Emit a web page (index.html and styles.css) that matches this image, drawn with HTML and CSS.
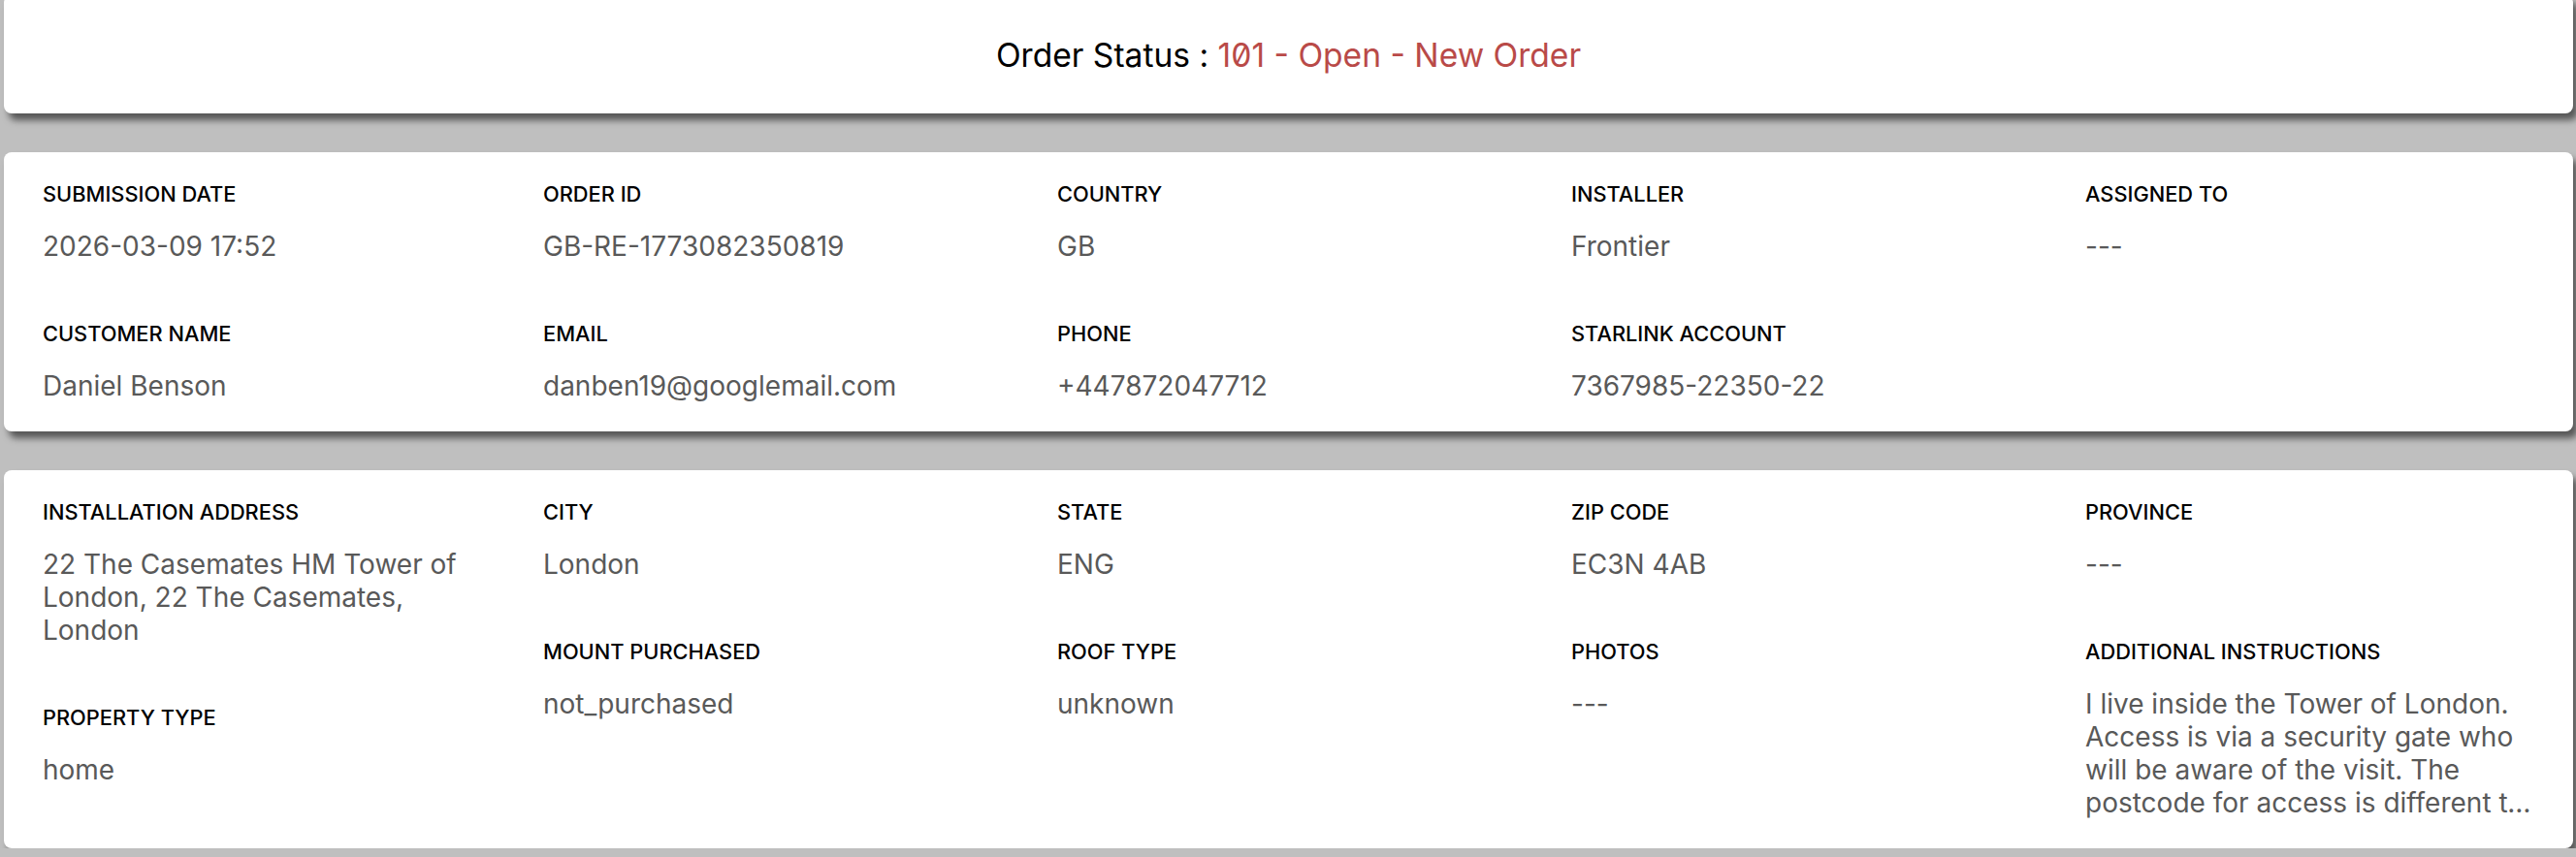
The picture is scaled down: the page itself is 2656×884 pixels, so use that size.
FILE: index.html
```html
<!DOCTYPE html>
<html lang="en">
<head>
<meta charset="utf-8">
<title>Order details</title>
<link rel="stylesheet" href="styles.css">
</head>
<body>
<main class="page">
  <section class="card status-card">
    <h1 class="status">Order Status : <span class="status-value">101 - Open - New Order</span></h1>
  </section>

  <section class="card info-card">
    <div class="col">
      <div class="field"><div class="label">Submission Date</div><div class="value">2026-03-09 17:52</div></div>
      <div class="field"><div class="label">Customer Name</div><div class="value">Daniel Benson</div></div>
    </div>
    <div class="col">
      <div class="field"><div class="label">Order ID</div><div class="value">GB-RE-1773082350819</div></div>
      <div class="field"><div class="label">Email</div><div class="value">danben19@googlemail.com</div></div>
    </div>
    <div class="col">
      <div class="field"><div class="label">Country</div><div class="value">GB</div></div>
      <div class="field"><div class="label">Phone</div><div class="value">+447872047712</div></div>
    </div>
    <div class="col">
      <div class="field"><div class="label">Installer</div><div class="value">Frontier</div></div>
      <div class="field"><div class="label">Starlink Account</div><div class="value">7367985-22350-22</div></div>
    </div>
    <div class="col">
      <div class="field"><div class="label">Assigned To</div><div class="value">---</div></div>
    </div>
  </section>

  <section class="card info-card">
    <div class="col">
      <div class="field"><div class="label">Installation Address</div><div class="value">22 The Casemates HM Tower of London, 22 The Casemates, London</div></div>
      <div class="field"><div class="label">Property Type</div><div class="value">home</div></div>
    </div>
    <div class="col">
      <div class="field"><div class="label">City</div><div class="value">London</div></div>
      <div class="field"><div class="label">Mount Purchased</div><div class="value">not_purchased</div></div>
    </div>
    <div class="col">
      <div class="field"><div class="label">State</div><div class="value">ENG</div></div>
      <div class="field"><div class="label">Roof Type</div><div class="value">unknown</div></div>
    </div>
    <div class="col">
      <div class="field"><div class="label">Zip Code</div><div class="value">EC3N 4AB</div></div>
      <div class="field"><div class="label">Photos</div><div class="value">---</div></div>
    </div>
    <div class="col">
      <div class="field"><div class="label">Province</div><div class="value">---</div></div>
      <div class="field"><div class="label">Additional Instructions</div><div class="value clamp">I live inside the Tower of London. Access is via a security gate who will be aware of the visit. The postcode for access is different to the one above, please use EC3N 4AB when navigating to the main entrance.</div></div>
    </div>
  </section>
</main>
</body>
</html>
```

FILE: styles.css
```css
* { box-sizing: border-box; }

html, body {
  margin: 0;
  padding: 0;
}

body {
  background: #bfbfbf;
  font-family: Inter, "Noto Sans", "Liberation Sans", sans-serif;
  color: #000;
}

.page {
  display: flex;
  flex-direction: column;
  gap: 40px;
  padding: 0 3px 0 4px;
  margin-top: -5px;
}

.card {
  background: #ffffff;
  border-radius: 8px;
  box-shadow: 5px 7px 7px rgba(0, 0, 0, 0.55);
}

.status-card {
  height: 122px;
  display: flex;
  align-items: center;
  justify-content: center;
  padding-top: 2px;
}

.status {
  margin: 0;
  font-size: 33.6px;
  font-weight: 400;
  line-height: 40px;
}

.status-value {
  color: #b94a48;
  font-feature-settings: "zero" 1;
}

.info-card {
  display: grid;
  grid-template-columns: 516px 530px 530px 530px 1fr;
  padding: 30px 40px;
}

.col {
  display: flex;
  flex-direction: column;
  gap: 60px;
  max-width: 462px;
}

.field {
  display: flex;
  flex-direction: column;
  gap: 24px;
}

.label {
  font-size: 21.8px;
  line-height: 26px;
  font-weight: 500;
  text-transform: uppercase;
  color: #000;
}

.value {
  font-size: 28px;
  line-height: 34px;
  font-weight: 400;
  color: #595959;
}

.clamp {
  display: -webkit-box;
  -webkit-box-orient: vertical;
  -webkit-line-clamp: 4;
  overflow: hidden;
}
```
